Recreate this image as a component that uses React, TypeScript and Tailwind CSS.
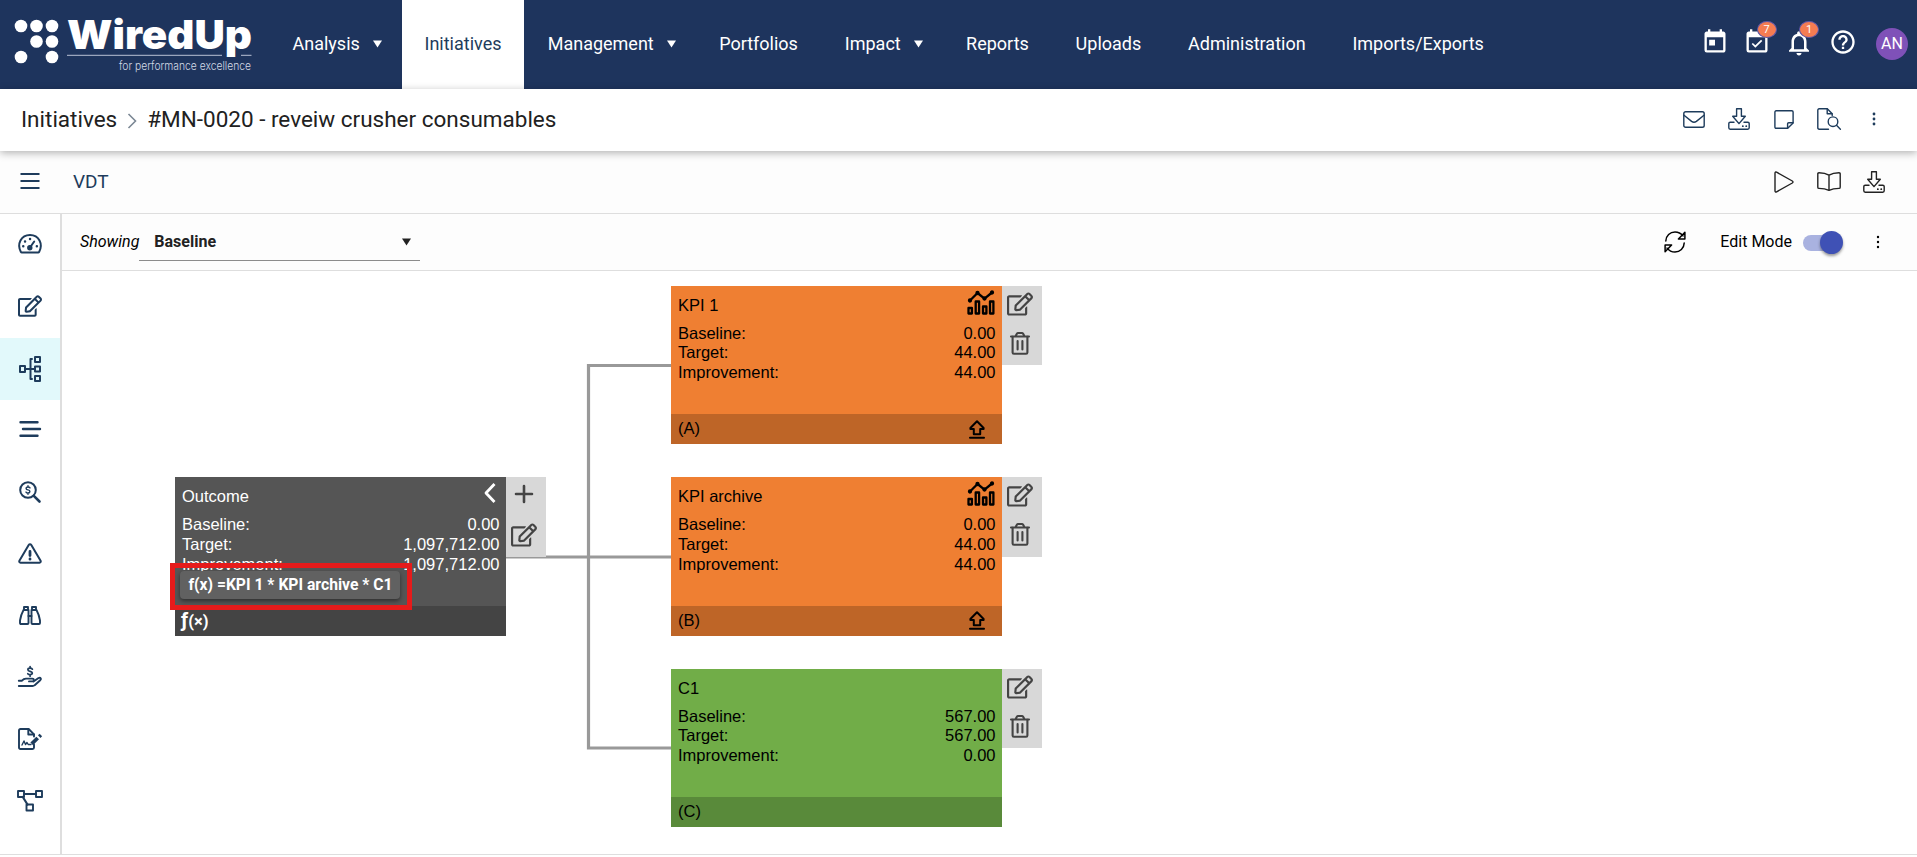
import type { ReactNode } from "react";
import { FaRegEdit } from "react-icons/fa";
import { MdEventAvailable, MdHelpOutline, MdNotificationsNone, MdToday } from "react-icons/md";

type NavItem = { label: string; menu?: boolean; active?: boolean };

const navItems: NavItem[] = [
  { label: "Analysis", menu: true },
  { label: "Initiatives", active: true },
  { label: "Management", menu: true },
  { label: "Portfolios" },
  { label: "Impact", menu: true },
  { label: "Reports" },
  { label: "Uploads" },
  { label: "Administration" },
  { label: "Imports/Exports" },
];

// --- Icons -------------------------------------------------------------------

function Icon({ w, h, sw = 1.5, children }: { w: number; h: number; sw?: number; children: ReactNode }) {
  return (
    <svg
      width={w}
      height={h}
      viewBox={`0 0 ${w} ${h}`}
      fill="none"
      stroke="currentColor"
      strokeWidth={sw}
      strokeLinecap="round"
      strokeLinejoin="round"
      className="block shrink-0 overflow-visible"
    >
      {children}
    </svg>
  );
}

const MailIcon = () => (
  <Icon w={22} h={17} sw={1.4}>
    <rect x="0.8" y="0.8" width="20.4" height="15.4" rx="1.8" />
    <path d="M1 4.2l7.6 6.2q2.4 1.8 4.8 0L21 4.2" />
  </Icon>
);

const DownloadIcon = () => (
  <Icon w={22} h={22} sw={1.4}>
    <path d="M8.6.8h4.8v7.4h3.900L11 15.600 4.700 8.200h3.900z" />
    <path d="M6 14.200H2.200q-1.400 0-1.400 1.400v4.200q0 1.400 1.400 1.400h17.600q1.400 0 1.400-1.400v-4.200q0-1.400-1.400-1.400H16" />
    <path d="M14.800 18.200h.1M18.200 18.200h.1" strokeWidth="1.800" />
  </Icon>
);

const NoteIcon = () => (
  <Icon w={20} h={19} sw={1.4}>
    <path d="M2.200.8h15.600q1.300 0 1.300 1.300v10.800l-5.400 5.400H2.200q-1.300 0-1.300-1.300V2.100Q.9.8 2.200.8z" />
    <path d="M13.600 18v-4.200q0-1.100 1.100-1.100H19" />
  </Icon>
);

const FileSearchIcon = () => (
  <Icon w={24} h={22} sw={1.4}>
    <path d="M11.500 21.200H2.200Q.8 21.200.8 19.800V2.200Q.8.8 2.200.8h8.100l4.900 4.900v1.800" />
    <path d="M10.200 1v4.800h4.800" />
    <circle cx="16" cy="13.700" r="4.800" />
    <path d="M19.500 17.300l3.900 3.900" />
  </Icon>
);

const DotsIcon = ({ r = 1.4 }: { r?: number }) => (
  <svg width="4" height="14" viewBox="0 0 4 14" fill="currentColor" className="block shrink-0">
    <circle cx="2" cy="2" r={r} />
    <circle cx="2" cy="7" r={r} />
    <circle cx="2" cy="12" r={r} />
  </svg>
);

const PlayIcon = () => (
  <Icon w={20} h={22} sw={1.4}>
    <path d="M1 2.200q0-1.800 1.600-1L18.300 10q1.400 1 0 2L2.600 20.800q-1.600.8-1.600-1z" />
  </Icon>
);

const BookIcon = () => (
  <Icon w={24} h={19} sw={1.4}>
    <path d="M12 3.200Q8 .8 2 .8.800.8.800 2v13.200q0 1.200 1.200 1.200 6 0 10 1.900 4-1.900 10-1.900 1.200 0 1.200-1.200V2q0-1.200-1.200-1.200-6 0-10 2.400zM12 3.200v15" />
  </Icon>
);

const RefreshIcon = () => (
  <Icon w={22} h={22} sw={1.5}>
    <path d="M1.800 10C2 4.500 6 1 11 1c3.200 0 6 1.400 8 3.900" />
    <path d="M20.900 1.200v6.700h-6.500z" />
    <path d="M20.200 12c-.2 5.500-4.200 9-9.200 9-3.200 0-6-1.400-8-3.900" />
    <path d="M1.100 20.800v-6.700h6.500z" />
  </Icon>
);

const GaugeIcon = () => (
  <Icon w={24} h={20} sw={2}>
    <path d="M3.800 18.500h16.400q.6 0 .9-.5C25.400 10 21 1 12 1S-1.400 10 2.900 18q.3.5.9.5z" />
    <path d="M12 13.500l4.200-6" />
    <circle cx="11.800" cy="13.800" r="1.700" fill="currentColor" />
    <path d="M5.200 12.200h.1M7 7.500h.1M12 5h.1M18.800 12.200h.1" strokeWidth="2.400" />
  </Icon>
);

const HierarchyIcon = () => (
  <Icon w={22} h={26} sw={2}>
    <rect x="1" y="10" width="5" height="6" />
    <rect x="16" y="1" width="5" height="5" />
    <rect x="16" y="10.500" width="5" height="5" />
    <rect x="16" y="20" width="5" height="5" />
    <path d="M6 13h10M13 3h-1.500v20H13" />
  </Icon>
);

const BarsIcon = () => (
  <Icon w={22} h={17} sw={2.400}>
    <path d="M1.500 1.200h17M4 8h17M1.500 14.800h17" />
  </Icon>
);

const SearchDollarIcon = () => (
  <Icon w={22} h={22} sw={2}>
    <circle cx="9" cy="9" r="7.800" />
    <path d="M14.800 14.800l5.700 5.700" strokeWidth="2.600" />
    <path d="M11 6.900q-.6-.9-2-.9-1.900 0-1.900 1.400 0 1.100 1.900 1.500t1.900 1.600q0 1.500-1.900 1.500-1.400 0-2-.9M9 4.800V6M9 12v1.200" strokeWidth="1.400" />
  </Icon>
);

const WarningIcon = () => (
  <Icon w={24} h={21} sw={2}>
    <path d="M12 1.200q.8 0 1.300.8l9.300 15.700q.7 1.800-1.200 2H2.600q-1.900-.2-1.200-2L10.700 2q.5-.8 1.300-.8z" />
    <path d="M12 8.500v4M12 16v.2" strokeWidth="2.800" />
  </Icon>
);

const BinocularsIcon = () => (
  <Icon w={22} h={19} sw={1.900}>
    <path d="M4.500 4h5v13q0 1-1 1H2q-1 0-1-1v-2.500Q1.800 9 4.500 4zM17.500 4h-5v13q0 1 1 1H20q1 0 1-1v-2.500Q20.200 9 17.500 4z" />
    <path d="M5 4V1h4v3M17 4V1h-4v3M9.500 10h3" />
  </Icon>
);

const HandDollarIcon = () => (
  <Icon w={24} h={22} sw={1.900}>
    <path d="M14.400 3.200q-.7-1-2.300-1-2.200 0-2.200 1.500 0 1.200 2.200 1.700t2.200 1.700q0 1.600-2.200 1.600-1.600 0-2.300-1M12.100.6v1.600M12.100 8.700v1.500" strokeWidth="1.700" />
    <path d="M.8 14.800h3l2.200-1.700q.8-.5 2-.5h6.500q1.300 0 1.300 1.300t-1.300 1.500H11M15.500 15.600l5-3.600q1.600-.7 2.300.4.400 1-.6 1.900l-5.500 4.900q-.8.800-2.200.8H.8" />
  </Icon>
);

const FileSignIcon = () => (
  <Icon w={24} h={22} sw={1.900}>
    <path d="M16 16.500v3q0 1.500-1.500 1.500h-12Q1 21 1 19.500v-17Q1 1 2.500 1h8.200L16 6.300v2.200" />
    <path d="M10.300 1.300v5.200H16" />
    <path d="M4 17l2-4 1.500 3.500L9 14.500l1.200 2H13" strokeWidth="1.400" />
    <path d="M13.700 15.800l6-5.800" strokeWidth="3.800" strokeLinecap="butt" />
    <path d="M21.200 8.600l1.700-1.600" strokeWidth="3.600" strokeLinecap="butt" />
  </Icon>
);

const NodesIcon = () => (
  <Icon w={26} h={22} sw={1.900}>
    <rect x="1" y="1" width="6" height="6" />
    <rect x="19" y="1" width="6" height="6" />
    <rect x="9.500" y="14.500" width="6.500" height="6" />
    <path d="M7 4h12M5.800 7l4.700 7.500" strokeWidth="2.200" />
  </Icon>
);

const TrashIcon = () => (
  <Icon w={20} h={23} sw={2.100}>
    <path d="M1 4.500h18M5.500 4.200L7 1.600Q7.400 1 8 1h4q.6 0 1 .6l1.500 2.600" />
    <path d="M2.600 4.800v15.700q0 1.300 1.300 1.300h12.200q1.300 0 1.300-1.300V4.800" />
    <path d="M7.600 9v8.500M12.400 9v8.500" />
  </Icon>
);

const ChartIcon = () => (
  <Icon w={28} h={24} sw={2.300}>
    <rect x="1.500" y="17" width="3.400" height="5.500" />
    <rect x="8.700" y="10.500" width="3.400" height="12" />
    <rect x="16" y="15.500" width="3.400" height="7" />
    <rect x="23" y="10.500" width="3.400" height="12" />
    <path d="M3 9.500L10.500 2l7 5.700L25 1.500" />
    <circle cx="3" cy="9.500" r="1" fill="currentColor" />
    <circle cx="10.500" cy="2" r="1" fill="currentColor" />
    <circle cx="17.500" cy="7.500" r="1" fill="currentColor" />
    <circle cx="25" cy="1.500" r="1" fill="currentColor" />
  </Icon>
);

const UploadIcon = () => (
  <Icon w={16} h={19} sw={2}>
    <path d="M8 1.200L1.400 8v.9h3.400v5.300h6.400V8.900h3.400V8z" />
    <path d="M1 17.700h14" />
  </Icon>
);

const Caret = () => (
  <svg width="9" height="8" viewBox="0 0 9 8" fill="currentColor" className="block">
    <path d="M0 .5h9L4.500 7.500z" />
  </svg>
);

// --- Shell -------------------------------------------------------------------

function Logo() {
  const dots = [
    [21, 26], [36.5, 26], [52, 26],
    [36.5, 41.5], [52, 41.5],
    [21, 57], [52, 57],
  ];
  return (
    <svg width="269" height="89" viewBox="0 0 269 89" fill="#fff" className="shrink-0 overflow-visible">
      {dots.map(([x, y]) => (
        <circle key={`${x}-${y}`} cx={x} cy={y} r="6.3" />
      ))}
      <text
        x="67"
        y="49"
        fontSize="40"
        textLength="185"
        lengthAdjust="spacingAndGlyphs"
        className="font-['Inter','Open_Sans',sans-serif] font-black"
      >
        WiredUp
      </text>
      <path d="M67 55.300h155M241 55.300h10.500" stroke="#b9c2d6" strokeWidth="1" />
      <text
        x="119"
        y="70"
        fontSize="11"
        fill="#d3d9e6"
        textLength="132"
        lengthAdjust="spacingAndGlyphs"
        className="font-['Inter','Lato',sans-serif] font-light"
      >
        for performance excellence
      </text>
    </svg>
  );
}

function HeaderIcon({ children, badge }: { children: ReactNode; badge?: string }) {
  return (
    <div className="relative grid h-7 w-[42.5px] place-items-center">
      {children}
      {badge && (
        <span className="absolute -top-[7px] left-5 flex h-[17px] w-5 items-center justify-center rounded-[50%] border border-[#5b56a8] bg-[#f57c52] text-[11px] leading-none text-white">
          {badge}
        </span>
      )}
    </div>
  );
}

function TopNav() {
  return (
    <header className="flex h-[89px] shrink-0 bg-[#1e345d] text-white">
      <Logo />
      <nav className="flex flex-1 text-[18px]">
        {navItems.map((item) => (
          <a
            key={item.label}
            className={`flex items-center gap-[13px] pb-[2px] whitespace-nowrap ${
              item.menu ? "pr-5 pl-[23.500px]" : item.active ? "px-[22.700px]" : "px-[23.400px]"
            } ${item.active ? "bg-white text-[#1e3c5c]" : ""}`}
          >
            {item.label}
            {item.menu && <Caret />}
          </a>
        ))}
      </nav>
      <div className="flex pt-7 pr-[9px]">
        <HeaderIcon>
          <MdToday size={28} />
        </HeaderIcon>
        <HeaderIcon badge="7">
          <MdEventAvailable size={28} className="mr-px" />
        </HeaderIcon>
        <HeaderIcon badge="1">
          <MdNotificationsNone size={30} className="mr-0.5 mb-0.5" />
        </HeaderIcon>
        <HeaderIcon>
          <MdHelpOutline size={28} />
        </HeaderIcon>
        <div className="ml-3 grid h-8 w-8 place-items-center rounded-full bg-[#7f51b8] text-[16px]">AN</div>
      </div>
    </header>
  );
}

const Slot = ({ children }: { children: ReactNode }) => (
  <div className="grid w-[45px] place-items-center">{children}</div>
);

function TitleBar() {
  return (
    <div className="relative z-10 flex h-[62px] shrink-0 items-center bg-white pr-[21px] pb-0.5 pl-[21px] shadow-[0_2px_8px_rgba(0,0,0,0.3)]">
      <h1 className="flex flex-1 items-center pt-0.5 text-[22.500px] whitespace-nowrap text-[#212121]">
        Initiatives
        <svg width="10" height="16" viewBox="0 0 10 16" fill="none" stroke="#7b8794" strokeWidth="1.600" className="mt-px mr-[10px] ml-2.5">
          <path d="M1.500 1l7 7-7 7" />
        </svg>
        #MN-0020 - reveiw crusher consumables
      </h1>
      <div className="flex text-[#1e3c5c]">
        <Slot><MailIcon /></Slot>
        <Slot><DownloadIcon /></Slot>
        <Slot><NoteIcon /></Slot>
        <Slot><FileSearchIcon /></Slot>
        <Slot><DotsIcon /></Slot>
      </div>
    </div>
  );
}

function SectionBar() {
  return (
    <div className="flex h-[63px] shrink-0 items-center border-b border-[#dedede] bg-[#fdfdfd] pr-[21px] pb-px pl-5">
      <div className="w-[53px] text-[#1e3c5c]">
        <Icon w={20} h={17} sw={2}>
          <path d="M.5 1h19M.5 8h19M.5 15h19" strokeLinecap="butt" />
        </Icon>
      </div>
      <h2 className="flex-1 pt-0.5 text-[19px] text-[#1e3c5c]">VDT</h2>
      <div className="flex text-[#222]">
        <Slot><PlayIcon /></Slot>
        <Slot><BookIcon /></Slot>
        <Slot><DownloadIcon /></Slot>
      </div>
    </div>
  );
}

const sideItems: { name: string; icon: ReactNode; active?: boolean }[] = [
  { name: "dashboard", icon: <GaugeIcon /> },
  { name: "edit", icon: <FaRegEdit size={24} /> },
  { name: "vdt", icon: <HierarchyIcon />, active: true },
  { name: "timeline", icon: <BarsIcon /> },
  { name: "costs", icon: <SearchDollarIcon /> },
  { name: "risks", icon: <WarningIcon /> },
  { name: "review", icon: <BinocularsIcon /> },
  { name: "benefits", icon: <HandDollarIcon /> },
  { name: "contract", icon: <FileSignIcon /> },
  { name: "workflow", icon: <NodesIcon /> },
];

function Sidebar() {
  return (
    <aside className="w-[62px] shrink-0 border-r-2 border-[#dedede] text-[#1e3c5c]">
      {sideItems.map((item) => (
        <div
          key={item.name}
          className={`grid h-[61.900px] place-items-center ${item.active ? "bg-[#e2f9fb] pt-px" : "pb-0.5"}`}
        >
          {item.icon}
        </div>
      ))}
    </aside>
  );
}

function Toolbar() {
  return (
    <div className="flex h-[57px] shrink-0 items-center border-b border-[#dedede] bg-[#fdfdfd] pr-[37px] pl-[18px] text-[16px] text-black">
      <span className="italic">Showing</span>
      <div className="mt-0.5 flex h-9 w-[281px] items-center justify-between border-b border-[#8c8c8c] pr-[9px] pb-0.5 pl-[15px] font-bold text-[#222]">
        Baseline
        <Caret />
      </div>
      <div className="ml-auto flex items-center">
        <RefreshIcon />
        <span className="mr-[11px] ml-[34px]">Edit Mode</span>
        <div className="relative mt-px mr-9 h-4 w-[37px] rounded-full bg-[#a9b2e0]">
          <span className="absolute -top-1 left-[17px] h-[23px] w-[23px] rounded-full bg-[#3f51b5] shadow-[0_2px_3px_rgba(0,0,0,0.4)]" />
        </div>
        <DotsIcon r={1.2} />
      </div>
    </div>
  );
}

// --- Driver tree -------------------------------------------------------------

type TreeNode = {
  title: string;
  baseline: string;
  target: string;
  improvement: string;
  footer: ReactNode;
  place: string;
  body: string;
  foot: string;
  corner?: ReactNode;
  upload?: boolean;
  actions: ReactNode;
};

const childActions = (
  <>
    <FaRegEdit size={26} className="mt-[5px] mr-[3px]" />
    <div className="mt-[15px] mr-[3px]">
      <TrashIcon />
    </div>
  </>
);

const chartCorner = (
  <div className="mr-px">
    <ChartIcon />
  </div>
);

const nodes: TreeNode[] = [
  {
    title: "Outcome",
    baseline: "0.00",
    target: "1,097,712.00",
    improvement: "1,097,712.00",
    footer: (
      <span className="-ml-px flex items-baseline font-['Roboto',sans-serif] font-bold">
        <span className="text-[20px] leading-none">ƒ</span>
        <span className="text-[16.500px] leading-none">(×)</span>
      </span>
    ),
    place: "left-[113px] top-[206px] text-white",
    body: "bg-[#555]",
    foot: "bg-[#444]",
    corner: (
      <div className="mt-px mr-[4px]">
        <Icon w={12} h={20} sw={2.8}>
          <path d="M10.500 1L2 10l8.500 9" strokeLinecap="butt" />
        </Icon>
      </div>
    ),
    actions: (
      <>
        <div className="mt-[8px] mr-[3px]">
          <Icon w={18} h={18} sw={2.6}>
            <path d="M9 1v16M1 9h16" />
          </Icon>
        </div>
        <FaRegEdit size={26} className="mt-[19px] mr-[4px]" />
      </>
    ),
  },
  {
    title: "KPI 1",
    baseline: "0.00",
    target: "44.00",
    improvement: "44.00",
    footer: "(A)",
    place: "left-[609px] top-[14.500px] text-black",
    body: "bg-[#ef7f32]",
    foot: "bg-[#be6527]",
    corner: chartCorner,
    upload: true,
    actions: childActions,
  },
  {
    title: "KPI archive",
    baseline: "0.00",
    target: "44.00",
    improvement: "44.00",
    footer: "(B)",
    place: "left-[609px] top-[206px] text-black",
    body: "bg-[#ef7f32]",
    foot: "bg-[#be6527]",
    corner: chartCorner,
    upload: true,
    actions: childActions,
  },
  {
    title: "C1",
    baseline: "567.00",
    target: "567.00",
    improvement: "0.00",
    footer: "(C)",
    place: "left-[609px] top-[397.500px] text-black",
    body: "bg-[#71ad48]",
    foot: "bg-[#598a3a]",
    actions: childActions,
  },
];

function NodeCard({ node }: { node: TreeNode }) {
  const rows = [
    ["Baseline:", node.baseline],
    ["Target:", node.target],
    ["Improvement:", node.improvement],
  ];
  return (
    <div className={`absolute flex items-start ${node.place}`}>
      <div className="flex h-[158.500px] w-[330.500px] flex-col font-['Liberation_Sans',Arial,sans-serif] text-[16.500px]">
        <div className={`flex-1 pr-[6px] pl-[7px] ${node.body}`}>
          <div className="flex h-[38px] justify-between">
            <span className="pt-[9px] leading-[20px]">{node.title}</span>
            <span className="pt-[5px]">{node.corner}</span>
          </div>
          {rows.map(([label, value]) => (
            <div key={label} className="flex justify-between leading-[19.900px]">
              <span>{label}</span>
              <span>{value}</span>
            </div>
          ))}
        </div>
        <div className={`flex h-[30px] items-center justify-between pr-[17px] pl-[7px] ${node.foot}`}>
          <span className="pb-px">{node.footer}</span>
          {node.upload && <UploadIcon />}
        </div>
      </div>
      <div className="flex h-[79.500px] w-10 flex-col items-center bg-[#d8d8d8] text-[#444]">{node.actions}</div>
    </div>
  );
}

function Canvas() {
  return (
    <div className="relative flex-1 bg-white">
      <svg width="700" height="580" viewBox="0 0 700 580" fill="none" stroke="#999" strokeWidth="3.200" className="absolute top-0 left-0">
        <path d="M440 286h170M610 94.500h-83.500v382.500h83.500" />
      </svg>
      {nodes.map((n) => (
        <NodeCard key={n.title} node={n} />
      ))}
      {/* Formula tooltip over the outcome node */}
      <div className="absolute top-[292px] left-[107.500px] h-[47px] w-[242px] border-[5px] border-[#e61b1b] pt-[3px] pl-[5.500px]">
        <div className="flex h-7 w-[220px] items-center justify-center rounded bg-[#616161] pl-px text-[15.700px] font-bold whitespace-nowrap text-white shadow-[0_2px_4px_rgba(0,0,0,0.45)]">
          f(x) =KPI 1 * KPI archive * C1
        </div>
      </div>
    </div>
  );
}

export default function App() {
  return (
    <div className="flex h-[857px] w-full flex-col overflow-hidden bg-white font-['Roboto',sans-serif]">
      <TopNav />
      <TitleBar />
      <SectionBar />
      <div className="flex h-[641px] shrink-0 border-b border-[#dedede]">
        <Sidebar />
        <main className="flex min-w-0 flex-1 flex-col">
          <Toolbar />
          <Canvas />
        </main>
      </div>
    </div>
  );
}
